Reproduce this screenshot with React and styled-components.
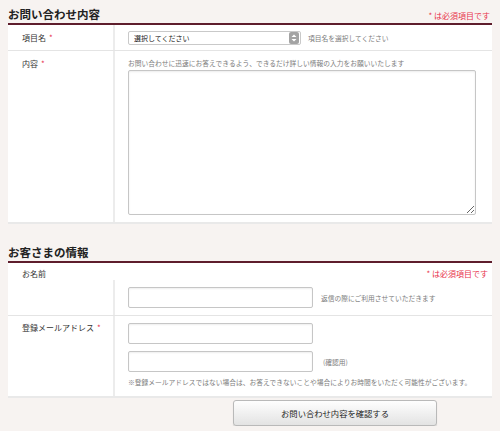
import styled, { createGlobalStyle } from 'styled-components'

const GlobalStyle = createGlobalStyle`
    body {
        margin: 0;
        background: #f7f3f1;
        font-family: 'Noto Sans CJK JP', 'Noto Sans', sans-serif;
        color: #333;
    }
`

const Page = styled.div`
    padding: 0 8px;
    width: 484px;
`

const Section = styled.section`
    margin-top: ${p => p.$top || 0}px;
`

const SectionHead = styled.div`
    display: flex;
    justify-content: space-between;
    align-items: flex-end;
    padding: 6px 0 1px;
    border-bottom: 2px solid #5e1d2c;
`

const Title = styled.h2`
    margin: 0;
    font-size: 11.5px;
    line-height: 16px;
    font-weight: bold;
    color: #222;
`

const Required = styled.span`
    font-size: 8px;
    line-height: 12px;
    color: #e8334d;
    padding-right: 2px;
`

const Panel = styled.div`
    background: #fff;
    border-bottom: 2px solid #e9e9e9;
`

const Row = styled.div`
    display: flex;
    border-bottom: ${p => (p.$last ? 'none' : '1px solid #e4e4e4')};
`

const HeadRow = styled.div`
    display: flex;
    justify-content: space-between;
    padding: 5px 2px 0 14px;
`

const NameLabel = styled.span`
    font-size: 8px;
    line-height: 12px;
    color: #333;
`

const LabelCell = styled.div`
    flex-shrink: 0;
    width: 107px;
    box-sizing: border-box;
    border-right: 2px solid #ececec;
    padding: ${p => p.$pt ?? 7}px 0 0 14px;
    font-size: 8px;
    line-height: 12px;
    color: #333;
`

const Mark = styled.span`
    color: #e8334d;
    margin-left: 3px;
`

const FieldCell = styled.div`
    flex: 1;
    padding: ${p => p.$pad || '7px 0 7px 13px'};
    display: flex;
    flex-direction: column;
    gap: ${p => p.$gap || 0}px;
`

const Line = styled.div`
    display: flex;
    align-items: center;
    gap: ${p => p.$gap || 8}px;
`

const Help = styled.span`
    font-size: 6.75px;
    line-height: 10px;
    color: #7c7c7c;
    white-space: nowrap;
    margin-top: ${p => p.$mt || 0}px;
`

const SelectWrap = styled.div`
    position: relative;
    width: 173px;
    height: 14px;
    line-height: 0;
`

const Select = styled.select`
    display: block;
    appearance: none;
    width: 100%;
    height: 14px;
    margin: 0;
    border: 1px solid #c9c9c9;
    border-radius: 2px;
    background: #fff;
    padding: 0 0 0 5px;
    font-family: inherit;
    font-size: 7px;
    line-height: 12px;
    color: #222;
    box-sizing: border-box;
`

const Arrows = styled.span`
    position: absolute;
    right: 2px;
    top: 1px;
    width: 10px;
    height: 12px;
    border-radius: 2px;
    background: #a3a3a3;
    display: flex;
    align-items: center;
    justify-content: center;
    pointer-events: none;
`

const TextArea = styled.textarea`
    width: 348px;
    height: 145px;
    margin: 2px 0 0;
    border: 1px solid #c6c6c6;
    border-radius: 2px;
    box-shadow: inset 0 1px 2px rgba(0, 0, 0, 0.08);
    box-sizing: border-box;
`

const Input = styled.input`
    width: 185px;
    height: 21px;
    margin: 0;
    border: 1px solid #c6c6c6;
    border-radius: 2px;
    box-shadow: inset 0 1px 2px rgba(0, 0, 0, 0.07);
    box-sizing: border-box;
    background: #fff;
`

const ButtonBar = styled.div`
    padding-left: 225px;
`

const Button = styled.button`
    width: 204px;
    height: 26px;
    border: 1px solid #b9b9b9;
    border-radius: 3px;
    background: linear-gradient(#fefefe, #e3e3e3);
    box-shadow: 0 1px 1px rgba(0, 0, 0, 0.15);
    font-family: inherit;
    font-size: 8.3px;
    color: #222;
    cursor: pointer;
`

function App() {
  return (
    <>
      <GlobalStyle />
      <Page>
        <Section>
          <SectionHead>
            <Title>お問い合わせ内容</Title>
            <Required>* は必須項目です</Required>
          </SectionHead>
          <Panel>
            <Row>
              <LabelCell>項目名<Mark>*</Mark></LabelCell>
              <FieldCell $pad="6px 0 5px 13px">
                <Line $gap={7}>
                  <SelectWrap>
                    <Select defaultValue="">
                      <option value="">選択してください</option>
                    </Select>
                    <Arrows>
                      <svg width="6" height="8" viewBox="0 0 6 8">
                        <path d="M3 0.5 L5.5 3 H0.5 Z M3 7.5 L5.5 5 H0.5 Z" fill="#fff" />
                      </svg>
                    </Arrows>
                  </SelectWrap>
                  <Help>項目名を選択してください</Help>
                </Line>
              </FieldCell>
            </Row>
            <Row $last>
              <LabelCell>内容<Mark>*</Mark></LabelCell>
              <FieldCell>
                <Help>お問い合わせに迅速にお答えできるよう、できるだけ詳しい情報の入力をお願いいたします</Help>
                <TextArea />
              </FieldCell>
            </Row>
          </Panel>
        </Section>

        <Section $top={14}>
          <SectionHead>
            <Title>お客さまの情報</Title>
          </SectionHead>
          <Panel>
            <HeadRow>
              <NameLabel>お名前</NameLabel>
              <Required>* は必須項目です</Required>
            </HeadRow>
            <Row>
              <LabelCell />
              <FieldCell>
                <Line>
                  <Input type="text" />
                  <Help>返信の際にご利用させていただきます</Help>
                </Line>
              </FieldCell>
            </Row>
            <Row $last>
              <LabelCell $pt={6}>登録メールアドレス<Mark>*</Mark></LabelCell>
              <FieldCell $pad="7px 0 9px 13px" $gap={7}>
                <Input type="email" />
                <Line $gap={10}>
                  <Input type="email" />
                  <Help>(確認用)</Help>
                </Line>
                <Help $mt={-2}>※登録メールアドレスではない場合は、お答えできないことや場合によりお時間をいただく可能性がございます。</Help>
              </FieldCell>
            </Row>
          </Panel>
          <ButtonBar>
            <Button type="button">お問い合わせ内容を確認する</Button>
          </ButtonBar>
        </Section>
      </Page>
    </>
  )
}

export default App
